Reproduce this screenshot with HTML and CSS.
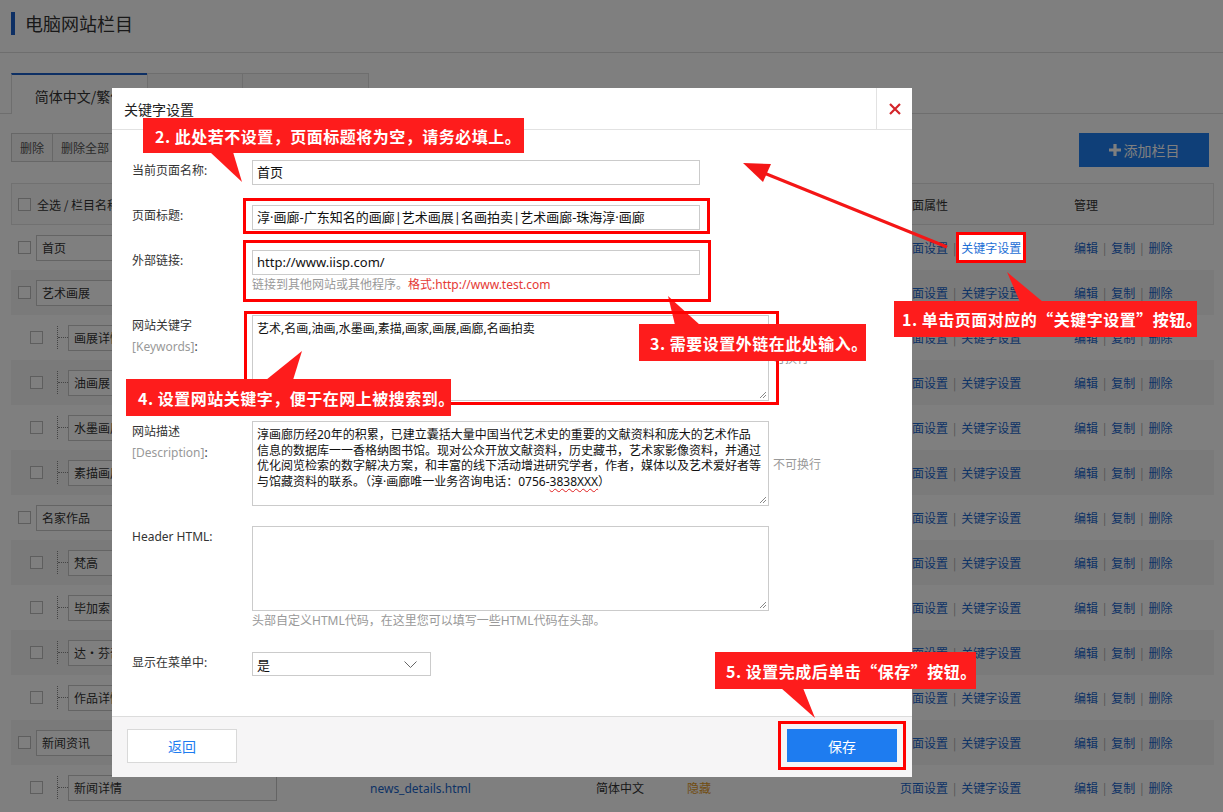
FILE: index.html
```html
<!DOCTYPE html>
<html lang="zh-CN">
<head>
<meta charset="utf-8">
<title>电脑网站栏目</title>
<link rel="stylesheet" href="styles.css">
</head>
<body>
<div class="page">
  <div class="page-head"><h1 class="page-title">电脑网站栏目</h1></div>
  <div class="tabs">
    <div class="tab tab-1 active">简体中文/繁体</div>
    <div class="tab tab-2">英文</div>
    <div class="tab tab-3">日文(日本)</div>
  </div>
  <div class="toolbar">
    <div class="btn-group"><span class="tb-btn">删除</span><span class="tb-btn">删除全部</span></div>
    <span class="add-btn"><svg class="plus" width="12" height="12" viewBox="0 0 12 12"><path d="M6 0v12M0 6h12" stroke="#fff" stroke-width="3.2"/></svg>添加栏目</span>
  </div>
  <div class="table">
    <div class="tr th">
      <div class="td name"><span class="cb"></span><span class="th-name">全选 / 栏目名称</span></div>
      <div class="td"></div>
      <div class="td"></div>
      <div class="td"></div>
      <div class="td">页面属性</div>
      <div class="td">管理</div>
    </div>

    <div class="tr">
      <div class="td name"><span class="cb"></span><span class="name-input top">首页</span></div>
      <div class="td"></div>
      <div class="td"></div>
      <div class="td"></div>
      <div class="td"><span class="lk">页面设置</span><span class="sep">|</span><span class="lk hl">关键字设置</span></div>
      <div class="td"><span class="lk">编辑</span><span class="sep">|</span><span class="lk">复制</span><span class="sep">|</span><span class="lk">删除</span></div>
    </div>
    <div class="tr shade">
      <div class="td name"><span class="cb"></span><span class="name-input top">艺术画展</span></div>
      <div class="td"></div>
      <div class="td"></div>
      <div class="td"></div>
      <div class="td"><span class="lk">页面设置</span><span class="sep">|</span><span class="lk">关键字设置</span></div>
      <div class="td"><span class="lk">编辑</span><span class="sep">|</span><span class="lk">复制</span><span class="sep">|</span><span class="lk">删除</span></div>
    </div>
    <div class="tr">
      <div class="td name child"><span class="cb"></span><span class="tree"></span><span class="name-input">画展详情</span></div>
      <div class="td"></div>
      <div class="td"></div>
      <div class="td"></div>
      <div class="td"><span class="lk">页面设置</span><span class="sep">|</span><span class="lk">关键字设置</span></div>
      <div class="td"><span class="lk">编辑</span><span class="sep">|</span><span class="lk">复制</span><span class="sep">|</span><span class="lk">删除</span></div>
    </div>
    <div class="tr shade">
      <div class="td name child"><span class="cb"></span><span class="tree"></span><span class="name-input">油画展</span></div>
      <div class="td"></div>
      <div class="td"></div>
      <div class="td"></div>
      <div class="td"><span class="lk">页面设置</span><span class="sep">|</span><span class="lk">关键字设置</span></div>
      <div class="td"><span class="lk">编辑</span><span class="sep">|</span><span class="lk">复制</span><span class="sep">|</span><span class="lk">删除</span></div>
    </div>
    <div class="tr">
      <div class="td name child"><span class="cb"></span><span class="tree"></span><span class="name-input">水墨画展</span></div>
      <div class="td"></div>
      <div class="td"></div>
      <div class="td"></div>
      <div class="td"><span class="lk">页面设置</span><span class="sep">|</span><span class="lk">关键字设置</span></div>
      <div class="td"><span class="lk">编辑</span><span class="sep">|</span><span class="lk">复制</span><span class="sep">|</span><span class="lk">删除</span></div>
    </div>
    <div class="tr shade">
      <div class="td name child"><span class="cb"></span><span class="tree"></span><span class="name-input">素描画展</span></div>
      <div class="td"></div>
      <div class="td"></div>
      <div class="td"></div>
      <div class="td"><span class="lk">页面设置</span><span class="sep">|</span><span class="lk">关键字设置</span></div>
      <div class="td"><span class="lk">编辑</span><span class="sep">|</span><span class="lk">复制</span><span class="sep">|</span><span class="lk">删除</span></div>
    </div>
    <div class="tr">
      <div class="td name"><span class="cb"></span><span class="name-input top">名家作品</span></div>
      <div class="td"></div>
      <div class="td"></div>
      <div class="td"></div>
      <div class="td"><span class="lk">页面设置</span><span class="sep">|</span><span class="lk">关键字设置</span></div>
      <div class="td"><span class="lk">编辑</span><span class="sep">|</span><span class="lk">复制</span><span class="sep">|</span><span class="lk">删除</span></div>
    </div>
    <div class="tr shade">
      <div class="td name child"><span class="cb"></span><span class="tree"></span><span class="name-input">梵高</span></div>
      <div class="td"></div>
      <div class="td"></div>
      <div class="td"></div>
      <div class="td"><span class="lk">页面设置</span><span class="sep">|</span><span class="lk">关键字设置</span></div>
      <div class="td"><span class="lk">编辑</span><span class="sep">|</span><span class="lk">复制</span><span class="sep">|</span><span class="lk">删除</span></div>
    </div>
    <div class="tr">
      <div class="td name child"><span class="cb"></span><span class="tree"></span><span class="name-input">毕加索</span></div>
      <div class="td"></div>
      <div class="td"></div>
      <div class="td"></div>
      <div class="td"><span class="lk">页面设置</span><span class="sep">|</span><span class="lk">关键字设置</span></div>
      <div class="td"><span class="lk">编辑</span><span class="sep">|</span><span class="lk">复制</span><span class="sep">|</span><span class="lk">删除</span></div>
    </div>
    <div class="tr shade">
      <div class="td name child"><span class="cb"></span><span class="tree"></span><span class="name-input">达·芬奇</span></div>
      <div class="td"></div>
      <div class="td"></div>
      <div class="td"></div>
      <div class="td"><span class="lk">页面设置</span><span class="sep">|</span><span class="lk">关键字设置</span></div>
      <div class="td"><span class="lk">编辑</span><span class="sep">|</span><span class="lk">复制</span><span class="sep">|</span><span class="lk">删除</span></div>
    </div>
    <div class="tr">
      <div class="td name child"><span class="cb"></span><span class="tree"></span><span class="name-input">作品详情</span></div>
      <div class="td"></div>
      <div class="td"></div>
      <div class="td"></div>
      <div class="td"><span class="lk">页面设置</span><span class="sep">|</span><span class="lk">关键字设置</span></div>
      <div class="td"><span class="lk">编辑</span><span class="sep">|</span><span class="lk">复制</span><span class="sep">|</span><span class="lk">删除</span></div>
    </div>
    <div class="tr shade">
      <div class="td name"><span class="cb"></span><span class="name-input top">新闻资讯</span></div>
      <div class="td"></div>
      <div class="td"></div>
      <div class="td"></div>
      <div class="td"><span class="lk">页面设置</span><span class="sep">|</span><span class="lk">关键字设置</span></div>
      <div class="td"><span class="lk">编辑</span><span class="sep">|</span><span class="lk">复制</span><span class="sep">|</span><span class="lk">删除</span></div>
    </div>
    <div class="tr">
      <div class="td name child"><span class="cb"></span><span class="tree"></span><span class="name-input">新闻详情</span></div>
      <div class="td"><span class="lk">news_details.html</span></div>
      <div class="td">简体中文</div>
      <div class="td"><span class="hide">隐藏</span></div>
      <div class="td"><span class="lk">页面设置</span><span class="sep">|</span><span class="lk">关键字设置</span></div>
      <div class="td"><span class="lk">编辑</span><span class="sep">|</span><span class="lk">复制</span><span class="sep">|</span><span class="lk">删除</span></div>
    </div>
  </div>
</div>

<div class="overlay"></div>

<div class="modal">
  <div class="m-head">
    <span class="m-title">关键字设置</span>
    <span class="m-close"><svg width="12" height="12" viewBox="0 0 12 12"><path d="M1 1L11 11M11 1L1 11" stroke="#d4252a" stroke-width="2.2"/></svg></span>
  </div>
  <div class="m-body">
    <div class="frow r1">
      <div class="flabel">当前页面名称:</div>
      <div class="fctl"><div class="inp">首页</div></div>
    </div>
    <div class="frow r2">
      <div class="flabel">页面标题:</div>
      <div class="fctl"><div class="inp">淳·画廊-广东知名的画廊|艺术画展|名画拍卖|艺术画廊-珠海淳·画廊</div></div>
    </div>
    <div class="frow r3">
      <div class="flabel">外部链接:</div>
      <div class="fctl">
        <div class="inp">http://www.iisp.com/</div>
        <div class="hint">链接到其他网站或其他程序。<span class="hint-red">格式:http://www.test.com</span></div>
      </div>
    </div>
    <div class="frow r4">
      <div class="flabel">网站关键字<br><span class="sub">[Keywords]</span>:</div>
      <div class="fctl side">
        <div class="ta ta-kw">艺术,名画,油画,水墨画,素描,画家,画展,画廊,名画拍卖<svg class="grip" width="9" height="9" viewBox="0 0 9 9"><path d="M8 2L2 8M8 5L5 8" stroke="#888" stroke-width="1"/></svg></div>
        <span class="note">可换行</span>
      </div>
    </div>
    <div class="frow r5">
      <div class="flabel">网站描述<br><span class="sub">[Description]</span>:</div>
      <div class="fctl side">
        <div class="ta ta-desc">淳画廊历经20年的积累，已建立囊括大量中国当代艺术史的重要的文献资料和庞大的艺术作品<br>信息的数据库一一香格纳图书馆。现对公众开放文献资料，历史藏书，艺术家影像资料，并通过<br>优化阅览检索的数字解决方案，和丰富的线下活动增进研究学者，作者，媒体以及艺术爱好者等<br>与馆藏资料的联系。（淳·画廊唯一业务咨询电话：0756-<span class="spell">3838XXX</span>）<svg class="grip" width="9" height="9" viewBox="0 0 9 9"><path d="M8 2L2 8M8 5L5 8" stroke="#888" stroke-width="1"/></svg></div>
        <span class="note">不可换行</span>
      </div>
    </div>
    <div class="frow r6">
      <div class="flabel">Header HTML:</div>
      <div class="fctl">
        <div class="ta ta-html"><svg class="grip" width="9" height="9" viewBox="0 0 9 9"><path d="M8 2L2 8M8 5L5 8" stroke="#888" stroke-width="1"/></svg></div>
        <div class="hint">头部自定义HTML代码，在这里您可以填写一些HTML代码在头部。</div>
      </div>
    </div>
    <div class="frow r7">
      <div class="flabel">显示在菜单中:</div>
      <div class="fctl"><div class="sel"><span>是</span><svg width="13" height="7" viewBox="0 0 13 7"><path d="M0.5 0.5L6.5 6.5L12.5 0.5" fill="none" stroke="#666" stroke-width="1"/></svg></div></div>
    </div>
  </div>
  <div class="m-foot">
    <span class="btn-back">返回</span>
    <span class="btn-save">保存</span>
  </div>
</div>

<div class="annot">
  <svg class="annot-svg" width="1223" height="812" viewBox="0 0 1223 812">
    <polygon points="210,152 233,152 242,182" fill="#fe1c1c"/>
    <polygon points="1020,302 1043,302 1007,272" fill="#fe1c1c"/>
    <polygon points="675,325 700,325 668,296" fill="#fe1c1c"/>
    <polygon points="266,380 293,380 302,351" fill="#fe1c1c"/>
    <polygon points="781,688 803,688 815,718" fill="#fe1c1c"/>
    <line x1="947" y1="247" x2="764" y2="173" stroke="#f41616" stroke-width="3"/>
    <polygon points="743,163 771,164 763,182" fill="#f41616"/>
  </svg>
  <div class="rbox b-title"></div>
  <div class="rbox b-link"></div>
  <div class="rbox b-kw"></div>
  <div class="rbox b-save"></div>
  <div class="callout c1">1. 单击页面对应的“关键字设置”按钮。</div>
  <div class="callout c2">2. 此处若不设置，页面标题将为空，请务必填上。</div>
  <div class="callout c3">3. 需要设置外链在此处输入。</div>
  <div class="callout c4">4. 设置网站关键字，便于在网上被搜索到。</div>
  <div class="callout c5">5. 设置完成后单击“保存”按钮。</div>
</div>
</body>
</html>
```
FILE: styles.css
```css
* { box-sizing: border-box; margin: 0; padding: 0; }
body {
  width: 1223px; height: 812px; overflow: hidden; position: relative;
  background: #fff; color: #333; font-size: 12px;
  font-family: "Noto Sans", "Noto Sans CJK SC", sans-serif;
}
.page { height: 812px; }

.page-head { height: 53px; border-bottom: 1px solid #dcdcdc; padding: 12px 0 0 11px; }
.page-title {
  font-size: 18px; font-weight: normal; line-height: 23px; color: #333;
  border-left: 4px solid #1a5fc8; padding-left: 10px;
  font-family: "Noto Sans CJK SC", sans-serif;
}

.tabs { margin-top: 20px; height: 41px; display: flex; padding-left: 11px; border-bottom: 1px solid #dcdcdc; }
.tab {
  height: 40px; border: 1px solid #dcdcdc; border-bottom: none; margin-right: -1px;
  font-size: 14px; display: flex; align-items: center; justify-content: center;
  background: #f7f7f7; color: #333; font-family: "Noto Sans CJK SC", sans-serif;
}
.tab.active { border-top: 2px solid #1a5fc8; background: #fff; height: 41px; padding-top: 2px; }
.tab-1 { width: 137px; }
.tab-2 { width: 96px; }
.tab-3 { width: 127px; }

.toolbar { margin-top: 19px; height: 50px; display: flex; justify-content: space-between; align-items: flex-start; padding: 0 14px 0 11px; }
.btn-group { display: flex; }
.tb-btn { height: 29px; line-height: 27px; padding: 0 8px; border: 1px solid #cfcfcf; background: #f6f6f6; margin-right: -1px; color: #555; font-family: "Noto Sans CJK SC", sans-serif; }
.add-btn {
  width: 130px; height: 34px; background: #1f7ff0; color: #fff; font-size: 14px;
  display: flex; align-items: center; justify-content: center; gap: 3px;
  font-family: "Noto Sans CJK SC", sans-serif;
}

.table { margin: 0 9px 0 11px; width: 1203px; }
.tr { display: grid; grid-template-columns: 349px 226px 91px 213px 174px 150px; height: 45px; align-items: center; }
.th { height: 42px; border: 1px solid #e3e3e3; background: #fafafa; grid-template-columns: 348px 226px 91px 213px 174px 149px; }
.shade { background: #f5f5f5; }
.td { padding-left: 10px; white-space: nowrap; overflow: hidden; font-family: "Noto Sans CJK SC", sans-serif; }
.td:nth-child(5) { overflow: visible; }
.td.name { padding-left: 7px; display: flex; align-items: center; }
.th .td.name { padding-left: 6px; }
.th-name { margin-left: 6px; }
.cb { width: 13px; height: 13px; border: 1px solid #bdbdbd; background: #fff; flex: none; }
.child .cb { margin-left: 12px; }
.tree {
  width: 11px; height: 23px; margin-left: 14px; flex: none; position: relative;
  border-left: 1px dotted #888;
}
.tree::after { content: ""; position: absolute; left: 0; top: 11px; width: 10px; border-top: 1px dotted #888; }
.name-input {
  height: 26px; line-height: 24px; border: 1px solid #c8c8c8; background: #fff;
  padding-left: 5px; width: 209px; flex: none;
}
.name-input.top { width: 241px; margin-left: 5px; }
.lk { color: #1a66cc; }
.td:nth-child(2) .lk { font-family: "Noto Sans", "Noto Sans CJK SC", sans-serif; }
.sep { color: #aaa; margin: 0 5px; }
.hide { color: #e39a26; }
.hl {
  position: relative; z-index: 3; display: inline-block;
  background: #fff; border: 3px solid #ff0000; color: #1e6fd6;
  line-height: 25px; padding: 0 2px; margin: -3px -5px;
}

.overlay { position: absolute; z-index: 2; left: 0; top: 0; width: 1223px; height: 812px; background: rgba(0,0,0,0.5); }

.modal {
  position: absolute; z-index: 4; left: 112px; top: 88px; width: 800px; height: 689px;
  background: #fff; display: flex; flex-direction: column;
}
.m-head { height: 42px; border-bottom: 1px solid #e2e2e2; display: flex; align-items: center; justify-content: space-between; flex: none; }
.m-title { padding-left: 12px; font-size: 14px; color: #222; font-family: "Noto Sans CJK SC", sans-serif; }
.m-close { width: 36px; height: 41px; border-left: 1px solid #e2e2e2; display: flex; align-items: center; justify-content: center; }

.m-body { flex: 1; padding: 30px 0 0 20px; }
.frow { display: flex; align-items: flex-start; }
.r1, .r2, .r3, .r4, .r5 { margin-bottom: 20px; }
.r6 { margin-bottom: 21px; }
.flabel { width: 120px; flex: none; line-height: 21px; color: #333; font-size: 12px; }
.sub { color: #999; }
.fctl { display: flex; flex-direction: column; }
.fctl.side { flex-direction: row; align-items: center; }
.inp {
  width: 448px; height: 25px; border: 1px solid #cbcbcb; padding-left: 4px;
  line-height: 23px; font-size: 13px; color: #111; white-space: nowrap; overflow: hidden;
}
.hint { line-height: 20px; color: #999; font-size: 12px; }
.hint-red { color: #e53935; }
.ta {
  position: relative; width: 517px; height: 86px; border: 1px solid #cbcbcb;
  padding: 5px 4px; font-size: 12px; line-height: 15.5px; color: #111; white-space: nowrap;
}
.ta-desc, .ta-html { height: 85px; }
.grip { position: absolute; right: 1px; bottom: 1px; }
.spell { text-decoration: underline wavy #e02020; text-decoration-thickness: 1px; text-underline-offset: 2px; }
.note { margin-left: 4px; color: #999; font-size: 12px; }
.sel {
  width: 179px; height: 24px; border: 1px solid #cbcbcb; display: flex; align-items: center;
  justify-content: space-between; padding: 0 13px 0 4px; font-size: 13px; color: #111;
}

.m-foot {
  height: 61px; flex: none; border-top: 1px solid #dcdcdc; background: #f6f5f6;
  display: flex; justify-content: space-between; align-items: flex-start; padding: 12px 15px 0 15px;
}
.btn-back {
  width: 110px; height: 34px; border: 1px solid #d9d9d9; background: #fff; color: #1e7cf0;
  font-size: 14px; display: flex; align-items: center; justify-content: center;
  font-family: "Noto Sans CJK SC", sans-serif;
}
.btn-save {
  width: 110px; height: 33px; background: #1e7cf0; color: #fff;
  font-size: 14px; display: flex; align-items: center; justify-content: center;
  font-family: "Noto Sans CJK SC", sans-serif;
}

.annot { position: absolute; z-index: 5; left: 0; top: 0; width: 1223px; height: 812px; pointer-events: none; }
.annot-svg { position: absolute; left: 0; top: 0; }
.rbox { position: absolute; border: 3px solid #ff0000; }
.b-title { left: 243px; top: 198px; width: 467px; height: 36px; }
.b-link { left: 243px; top: 240px; width: 468px; height: 62px; }
.b-kw { left: 244px; top: 311px; width: 535px; height: 94px; }
.b-save { left: 778px; top: 721px; width: 128px; height: 49px; }
.callout {
  position: absolute; background: #fe1c1c; color: #fff; white-space: nowrap;
  font-family: "Noto Sans CJK SC", sans-serif; font-weight: bold; font-size: 16px;
  letter-spacing: 0.5px; display: flex; align-items: center;
}
.c1 { left: 894px; top: 301px; width: 303px; height: 36px; padding-left: 8px; }
.c2 { left: 143px; top: 118px; width: 381px; height: 35px; padding-left: 12px; }
.c3 { left: 639px; top: 324px; width: 227px; height: 37px; padding-left: 11px; }
.c4 { left: 126px; top: 379px; width: 325px; height: 37px; padding-left: 12px; }
.c5 { left: 715px; top: 652px; width: 261px; height: 37px; padding-left: 11px; }
```
